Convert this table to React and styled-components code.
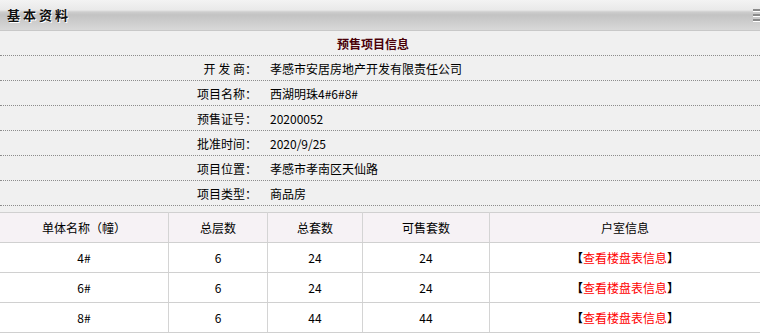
import React from 'react'
import styled, { createGlobalStyle } from 'styled-components'

const GlobalStyle = createGlobalStyle`
  body {
    margin: 0;
    background: #ffffff;
    font-family: "SimSun", "Noto Sans CJK SC", "DejaVu Sans", sans-serif;
    font-size: 12px;
    color: #000;
  }
`

const Page = styled.div`
  width: 760px;
`

const TitleBar = styled.div`
  height: 31px;
  border-bottom: 1px solid #c8c8c8;
  background: linear-gradient(#f3f3f3 0px, #e9e9e9 10px, #cdcdcd 12px, #c3c3c3 15px, #dadada 31px);
  display: flex;
  align-items: center;
  justify-content: space-between;
  padding-left: 7px;
  padding-bottom: 2px;
  box-sizing: border-box;
`

const TitleText = styled.div`
  font-size: 13px;
  font-weight: bold;
  letter-spacing: 3px;
  color: #111;
  text-shadow: 1px 1px 0 #ffffff;
`

const Grip = styled.div`
  display: flex;
  flex-direction: column;
  gap: 2px;
  margin-top: 2px;
`

const GripLine = styled.span`
  display: block;
  width: 7px;
  height: 2px;
  background: #8a8a8a;
  border-bottom: 1px solid #ffffff;
`

const InfoPanel = styled.div`
  background: #f0f0f0;
  padding-bottom: 6px;
`

const InfoRow = styled.div`
  display: flex;
  align-items: center;
  height: 24px;
  border-bottom: 1px dotted #8c8c8c;
`

const SectionTitle = styled(InfoRow)`
  justify-content: center;
  font-weight: bold;
  color: #4a0008;
  padding-right: 14px;
`

const Label = styled.div`
  width: 257px;
  text-align: right;
`

const Value = styled.div`
  padding-left: 13px;
`

const Table = styled.table`
  width: 760px;
  border-collapse: collapse;
  table-layout: fixed;
  background: #ffffff;
  border-top: 1px solid #d0d0d0;
`

const Th = styled.th`
  height: 29px;
  padding: 0;
  font-weight: normal;
  background: #f6f2f5;
  border-bottom: 1px solid #d0d0d0;
  border-right: ${p => (p.last ? 'none' : '1px solid #d4d4d4')};
  width: ${p => (p.w ? `${p.w}px` : 'auto')};
  text-align: center;
`

const Td = styled.td`
  height: 29px;
  padding: 0;
  text-align: center;
  border-bottom: 1px solid #d0d0d0;
  border-right: ${p => (p.last ? 'none' : '1px solid #d4d4d4')};
`

const Bracket = styled.span`
  font-weight: bold;
  color: #000;
`

const LinkText = styled.a`
  color: #ff0000;
  text-decoration: none;
  cursor: pointer;
`

const info = [
  ['开 发 商：', '孝感市安居房地产开发有限责任公司'],
  ['项目名称：', '西湖明珠4#6#8#'],
  ['预售证号：', '20200052'],
  ['批准时间：', '2020/9/25'],
  ['项目位置：', '孝感市孝南区天仙路'],
  ['项目类型：', '商品房'],
]

const columns = [
  { title: '单体名称（幢）', w: 168 },
  { title: '总层数', w: 98 },
  { title: '总套数', w: 94 },
  { title: '可售套数', w: 126 },
  { title: '户室信息' },
]

const buildings = [
  { name: '4#', floors: 6, total: 24, sale: 24 },
  { name: '6#', floors: 6, total: 24, sale: 24 },
  { name: '8#', floors: 6, total: 44, sale: 44 },
]

export default function App() {
  return (
    <Page>
      <GlobalStyle />
      <TitleBar>
        <TitleText>基本资料</TitleText>
        <Grip>
          <GripLine />
          <GripLine />
          <GripLine />
        </Grip>
      </TitleBar>
      <InfoPanel>
        <SectionTitle>预售项目信息</SectionTitle>
        {info.map(([label, value]) => (
          <InfoRow key={label}>
            <Label>{label}</Label>
            <Value>{value}</Value>
          </InfoRow>
        ))}
      </InfoPanel>
      <Table>
        <thead>
          <tr>
            {columns.map((c, i) => (
              <Th key={c.title} w={c.w} last={i === columns.length - 1}>{c.title}</Th>
            ))}
          </tr>
        </thead>
        <tbody>
          {buildings.map(b => (
            <tr key={b.name}>
              <Td>{b.name}</Td>
              <Td>{b.floors}</Td>
              <Td>{b.total}</Td>
              <Td>{b.sale}</Td>
              <Td last>
                <Bracket>【</Bracket>
                <LinkText>查看楼盘表信息</LinkText>
                <Bracket>】</Bracket>
              </Td>
            </tr>
          ))}
        </tbody>
      </Table>
    </Page>
  )
}
